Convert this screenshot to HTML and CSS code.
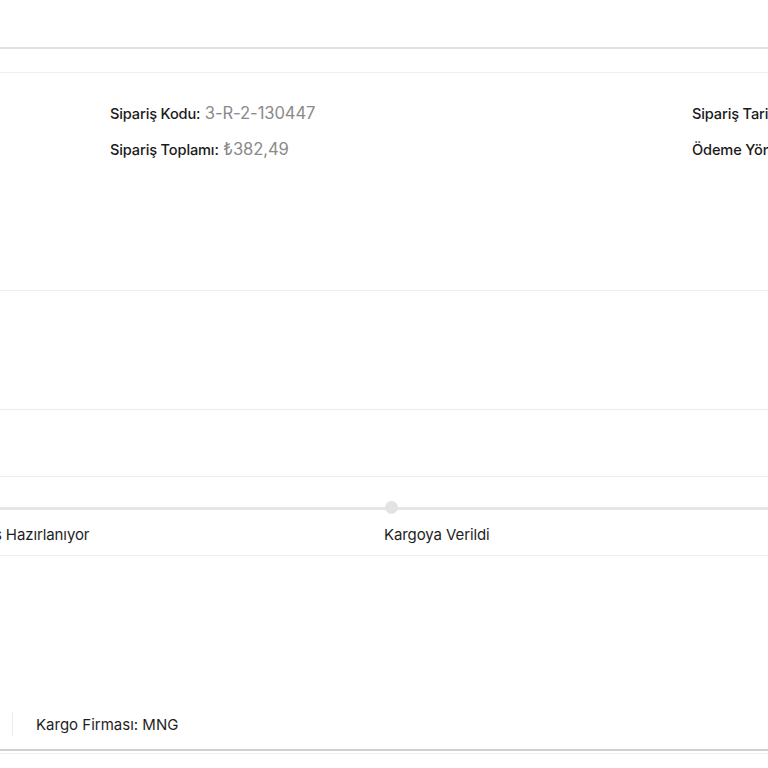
FILE: index.html
```html
<!DOCTYPE html>
<html lang="tr">
<head>
<meta charset="utf-8">
<link rel="stylesheet" href="styles.css">
</head>
<body>
<div class="page">
  <header class="topbar"></header>
  <div class="spacer"></div>
  <section class="order-info">
    <div class="info-col info-left">
      <p class="info-row"><span class="label">Sipariş Kodu:</span> <span class="value">3-R-2-130447</span></p>
      <p class="info-row"><span class="label">Sipariş Toplamı:</span> <span class="value">₺382,49</span></p>
    </div>
    <div class="info-col info-right">
      <p class="info-row"><span class="label">Sipariş Tarihi:</span></p>
      <p class="info-row"><span class="label">Ödeme Yöntemi:</span></p>
    </div>
  </section>
  <section class="block block-a"></section>
  <section class="block block-b"></section>
  <section class="progress">
    <div class="track"></div>
    <div class="steps">
      <div class="step"><span class="step-label">Sipariş Hazırlanıyor</span></div>
      <div class="step"><span class="dot"></span><span class="step-label">Kargoya Verildi</span></div>
    </div>
  </section>
  <section class="shipping">
    <div class="ship-row">
      <span class="divider"></span>
      <span class="ship-text">Kargo Firması: MNG</span>
    </div>
  </section>
  <footer class="bottom"></footer>
</div>
</body>
</html>
```

FILE: styles.css
```css
* { box-sizing: border-box; }
html, body {
  margin: 0;
  padding: 0;
  background: #fff;
  overflow: hidden;
}
body {
  font-family: Inter, Lato, "Liberation Sans", sans-serif;
  color: #222;
}
.page {
  width: 768px;
  overflow: hidden;
  white-space: nowrap;
}
.topbar {
  height: 49px;
  border-bottom: 2px solid #e2e2e2;
}
.spacer {
  height: 24px;
  border-bottom: 1px solid #efefef;
}
.order-info {
  height: 218px;
  border-bottom: 1px solid #ececec;
  display: flex;
  padding-top: 29px;
}
.info-col {
  display: flex;
  flex-direction: column;
  gap: 14px;
  flex: none;
}
.info-left { padding-left: 110px; width: 692px; }
.info-row {
  margin: 0;
  height: 22px;
  line-height: 22px;
}
.label {
  font-size: 14.6px;
  font-weight: 500;
  color: #1a1a1a;
  letter-spacing: -0.15px;
}
.value {
  font-size: 16.6px;
  color: #8a8a8a;
  letter-spacing: -0.1px;
}
.block-a {
  height: 119px;
  border-bottom: 1px solid #ececec;
}
.block-b {
  height: 67px;
  border-bottom: 1px solid #ececec;
}
.progress {
  height: 79px;
  border-bottom: 1px solid #ededed;
  padding-top: 30px;
}
.track {
  height: 3px;
  background: #e6e6e6;
}
.steps {
  display: flex;
  margin-left: -46px;
  margin-top: 14px;
}
.step {
  width: 430px;
  flex: none;
  position: relative;
}
.step-label {
  font-size: 15px;
  color: #1e1e1e;
  line-height: 20px;
  letter-spacing: -0.1px;
}
.dot {
  position: absolute;
  left: 1px;
  top: -23px;
  width: 13px;
  height: 13px;
  border-radius: 50%;
  background: #e3e3e3;
}
.shipping {
  height: 195px;
  display: flex;
  flex-direction: column;
  justify-content: flex-end;
  padding-bottom: 13px;
  border-bottom: 2px solid #d0d0d0;
}
.ship-row {
  display: flex;
  align-items: center;
  gap: 23px;
  padding-left: 12px;
}
.divider {
  width: 1px;
  height: 24px;
  background: #ececec;
}
.ship-text {
  font-size: 15px;
  color: #1e1e1e;
  letter-spacing: 0;
}
.bottom {
  height: 3px;
  border-bottom: 1px solid #eeeeee;
}
```
